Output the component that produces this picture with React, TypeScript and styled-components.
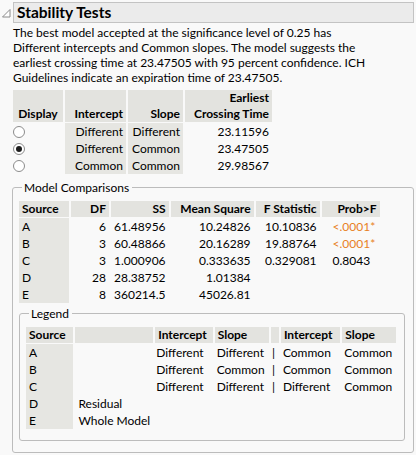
import styled, { createGlobalStyle } from 'styled-components';

const GlobalStyle = createGlobalStyle`
  body {
    margin: 0;
    background: #f9f9f9;
    font-family: Lato, 'Noto Sans', sans-serif;
    font-size: 12px;
    color: #000;
  }
`;

const Report = styled.div`
  width: 416px;
  height: 455px;
  overflow: hidden;
  padding: 2px 2px 0 2px;
  box-sizing: border-box;
`;

const OutlineHead = styled.div`
  display: flex;
  align-items: center;
  gap: 2px;
`;

const TitleBar = styled.div`
  flex: 1;
  height: 21px;
  box-sizing: border-box;
  background: #ebebeb;
  border: 1px solid #c3c3c3;
  padding-left: 3px;
  font-size: 15.5px;
  font-weight: bold;
  line-height: 19px;
`;

const Body = styled.div`
  padding-left: 11px;
`;

const Summary = styled.p`
  margin: 2px 0 0;
  line-height: 15px;
`;

const Table = styled.table`
  border-collapse: separate;
  border-spacing: 2px 0;
  margin-left: -2px;
  table-layout: fixed;
`;

const Th = styled.th<{ $w: number; $align?: string }>`
  width: ${({ $w }) => $w}px;
  box-sizing: border-box;
  background: #e3e3df;
  border-bottom: 1px solid #f9f9f9;
  padding: 0 3px;
  font-weight: bold;
  line-height: 16px;
  text-align: ${({ $align }) => $align || 'right'};
  vertical-align: bottom;
  white-space: nowrap;
`;

const Td = styled.td<{ $shade?: boolean; $align?: string; $pad?: number }>`
  background: ${({ $shade }) => ($shade ? '#e6e6e2' : 'transparent')};
  padding: 0 3px 0 ${({ $pad }) => ($pad ?? 3)}px;
  line-height: 17px;
  text-align: ${({ $align }) => $align || 'right'};
  white-space: nowrap;
`;

const Flag = styled.span`
  color: #e8801e;
`;

const Radio = styled.span<{ $on?: boolean }>`
  display: inline-block;
  width: 12px;
  height: 12px;
  box-sizing: border-box;
  border-radius: 50%;
  border: 1px solid #8c8c8c;
  background: #fff;
  vertical-align: middle;
  position: relative;
  top: -1px;
  &::after {
    content: '';
    display: ${({ $on }) => ($on ? 'block' : 'none')};
    width: 6px;
    height: 6px;
    margin: 2px;
    border-radius: 50%;
    background: #1d1d1d;
  }
`;

const Group = styled.fieldset<{ $inner?: boolean }>`
  margin: ${({ $inner }) => ($inner ? '3px 0 0 0' : '6px 0 0 -1px')};
  padding: 0 6px 11px 6px;
  border: 1px solid #bcbcbc;
  border-radius: 3px;
  width: ${({ $inner }) => ($inner ? 386 : 402)}px;
  box-sizing: border-box;
`;

const Caption = styled.legend`
  padding: 0 3px 0 2px;
  margin-left: 3px;
  line-height: 15px;
`;

const Gap = styled.div<{ $h?: number }>`
  height: ${({ $h }) => $h ?? 5}px;
`;

const displayRows = [
  { on: false, i: 'Different', s: 'Different', t: '23.11596' },
  { on: true, i: 'Different', s: 'Common', t: '23.47505' },
  { on: false, i: 'Common', s: 'Common', t: '29.98567' },
];

const compRows = [
  { src: 'A', df: '6', ss: '61.48956', ms: '10.24826', f: '10.10836', p: '<.0001*', sig: true },
  { src: 'B', df: '3', ss: '60.48866', ms: '20.16289', f: '19.88764', p: '<.0001*', sig: true },
  { src: 'C', df: '3', ss: '1.000906', ms: '0.333635', f: '0.329081', p: '0.8043', sig: false },
  { src: 'D', df: '28', ss: '28.38752', ms: '1.01384', f: '', p: '', sig: false },
  { src: 'E', df: '8', ss: '360214.5', ms: '45026.81', f: '', p: '', sig: false },
];

const legendRows = [
  { src: 'A', name: '', a: ['Different', 'Different', 'Common', 'Common'] },
  { src: 'B', name: '', a: ['Different', 'Common', 'Common', 'Common'] },
  { src: 'C', name: '', a: ['Different', 'Different', 'Different', 'Common'] },
  { src: 'D', name: 'Residual', a: null },
  { src: 'E', name: 'Whole Model', a: null },
];

function Toggle() {
  return (
    <svg width="9" height="10" viewBox="0 0 9 10">
      <path d="M8 1.5 L8 9 L0.5 9 Z" fill="#fff" stroke="#8a8a8a" strokeWidth="1" />
    </svg>
  );
}

export default function App() {
  return (
    <Report>
      <GlobalStyle />
      <OutlineHead>
        <Toggle />
        <TitleBar>Stability Tests</TitleBar>
      </OutlineHead>
      <Body>
        <Summary>
          The best model accepted at the significance level of 0.25 has
          <br />
          Different intercepts and Common slopes. The model suggests the
          <br />
          earliest crossing time at 23.47505 with 95 percent confidence. ICH
          <br />
          Guidelines indicate an expiration time of 23.47505.
        </Summary>
        <Gap />
        <Table>
          <thead>
            <tr>
              <Th $w={50} $align="center">Display</Th>
              <Th $w={61}>Intercept</Th>
              <Th $w={55}>Slope</Th>
              <Th $w={87}>
                Earliest
                <br />
                Crossing Time
              </Th>
            </tr>
          </thead>
          <tbody>
            {displayRows.map((r) => (
              <tr key={r.t}>
                <Td $align="left" $pad={0}>
                  <Radio $on={r.on} />
                </Td>
                <Td $shade>{r.i}</Td>
                <Td $shade>{r.s}</Td>
                <Td>{r.t}</Td>
              </tr>
            ))}
          </tbody>
        </Table>

        <Group>
          <Caption>Model Comparisons</Caption>
          <Gap $h={6} />
          <Table>
            <thead>
              <tr>
                <Th $w={50} $align="left">Source</Th>
                <Th $w={38}>DF</Th>
                <Th $w={57}>SS</Th>
                <Th $w={83}>Mean Square</Th>
                <Th $w={64}>F Statistic</Th>
                <Th $w={58}>Prob&gt;F</Th>
              </tr>
            </thead>
            <tbody>
              {compRows.map((r) => (
                <tr key={r.src}>
                  <Td $shade $align="left">{r.src}</Td>
                  <Td>{r.df}</Td>
                  <Td>{r.ss}</Td>
                  <Td>{r.ms}</Td>
                  <Td>{r.f}</Td>
                  <Td $align="left" $pad={11}>
                    {r.sig ? <Flag>{r.p}</Flag> : r.p}
                  </Td>
                </tr>
              ))}
            </tbody>
          </Table>

          <Group $inner>
            <Caption>Legend</Caption>
            <Gap $h={6} />
            <Table>
              <thead>
                <tr>
                  <Th $w={50} $align="left">Source</Th>
                  <Th $w={77} $align="left"></Th>
                  <Th $w={59} $align="left">Intercept</Th>
                  <Th $w={55} $align="left">Slope</Th>
                  <Th $w={9} $align="center"></Th>
                  <Th $w={62} $align="left">Intercept</Th>
                  <Th $w={54} $align="left">Slope</Th>
                </tr>
              </thead>
              <tbody>
                {legendRows.map((r) => (
                  <tr key={r.src}>
                    <Td $shade $align="left">{r.src}</Td>
                    <Td $align="left">{r.name}</Td>
                    <Td $align="left" $pad={1}>{r.a ? r.a[0] : ''}</Td>
                    <Td $align="left" $pad={2}>{r.a ? r.a[1] : ''}</Td>
                    <Td $align="center" $pad={0}>{r.a ? '|' : ''}</Td>
                    <Td $align="left" $pad={2}>{r.a ? r.a[2] : ''}</Td>
                    <Td $align="left" $pad={2}>{r.a ? r.a[3] : ''}</Td>
                  </tr>
                ))}
              </tbody>
            </Table>
          </Group>
        </Group>
      </Body>
    </Report>
  );
}
